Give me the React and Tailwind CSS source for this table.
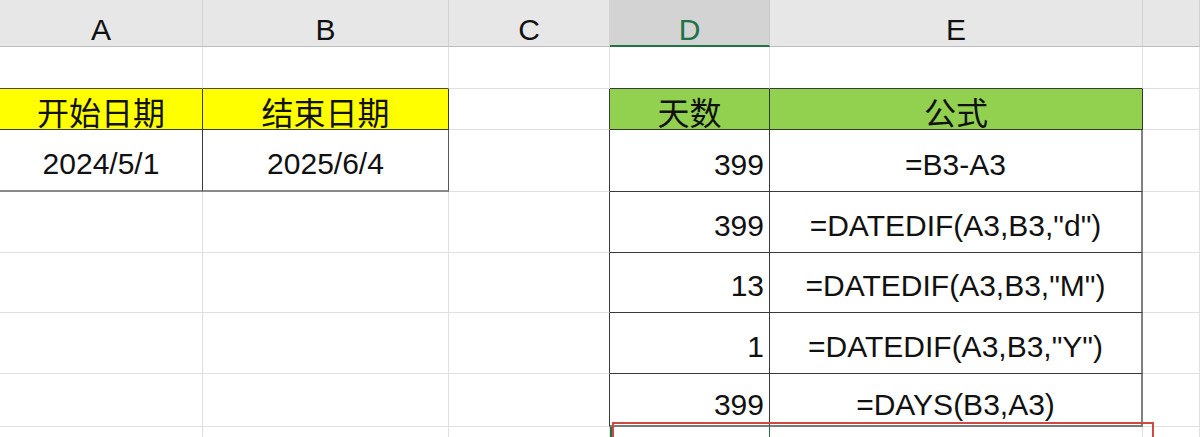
import React from "react"

const cols = ["A", "B", "C", "D", "E", ""]

export default function App() {
  return (
    <div
      className="relative w-[1200px] h-[437px] overflow-hidden bg-white text-[#111]"
      style={{ fontFamily: "'Liberation Sans', 'Noto Sans CJK SC', sans-serif" }}
    >
      <div className="grid grid-cols-[203px_246px_161px_160px_373px_1fr] grid-rows-[47px_42px_41px_62px_61px_60px_61px_53px_40px]">
        {/* ── column headers ── */}
        {cols.map((c) =>
          c === "D" ? (
            <div key={c} className="flex items-end justify-center bg-[#d3d3d3] border-r border-[#c8c8c8] border-b-2 border-b-[#217346] text-[30px] leading-none text-[#217346]">
              {c}
            </div>
          ) : (
            <div key={c || "f"} className="flex items-end justify-center bg-[#e7e7e7] border-r border-[#d2d2d2] border-b border-b-[#bdbdbd] text-[30px] leading-none pb-px">
              {c}
            </div>
          )
        )}

        {/* ── row 1 ── */}
        <div className="border-r border-[#e0e0e0] border-b border-b-[#4a4a4a]" />
        <div className="border-r border-[#e0e0e0] border-b border-b-[#4a4a4a]" />
        <div className="border-r border-b border-[#e0e0e0]" />
        <div className="border-r border-[#e0e0e0] border-b border-b-[#3a3a3a]" />
        <div className="border-r border-[#e0e0e0] border-b border-b-[#3a3a3a]" />
        <div className="border-r border-b border-[#e0e0e0]" />

        {/* ── row 2: table headers ── */}
        <div className="flex items-end justify-center bg-[#ffff00] border-r border-b border-[#3a3a3a] text-[32px] leading-none pb-[2px]" style={{ fontFamily: "'Noto Sans CJK SC', sans-serif" }}>
          开始日期
        </div>
        <div className="flex items-end justify-center bg-[#ffff00] border-r border-b border-[#3a3a3a] text-[32px] leading-none pb-[2px]" style={{ fontFamily: "'Noto Sans CJK SC', sans-serif" }}>
          结束日期
        </div>
        <div className="border-r border-r-[#3a3a3a] border-b border-b-[#e0e0e0]" />
        <div className="flex items-end justify-center bg-[#92d050] border-r border-b border-[#2f3a28] text-[32px] leading-none pb-[2px]" style={{ fontFamily: "'Noto Sans CJK SC', sans-serif" }}>
          天数
        </div>
        <div className="flex items-end justify-center bg-[#92d050] border-r border-b border-[#2f3a28] text-[32px] leading-none pb-[2px]" style={{ fontFamily: "'Noto Sans CJK SC', sans-serif" }}>
          公式
        </div>
        <div className="border-r border-b border-[#e0e0e0]" />

        {/* ── row 3 ── */}
        <div className="flex items-end justify-center border-r border-r-[#3a3a3a] border-b-2 border-b-[#8a8a8a] text-[30px] leading-none pb-[11px]">
          2024/5/1
        </div>
        <div className="flex items-end justify-center border-r border-r-[#5a5a5a] border-b-2 border-b-[#8a8a8a] text-[30px] leading-none pb-[11px]">
          2025/6/4
        </div>
        <div className="border-r border-r-[#3a3a3a] border-b border-b-[#e0e0e0]" />
        <div className="flex items-end justify-end border-r border-b border-[#3a3a3a] text-[30px] leading-none pb-[11px] pr-[5px]">
          399
        </div>
        <div className="flex items-end justify-center border-r-2 border-r-[#808080] border-b border-b-[#3a3a3a] text-[30px] leading-none pb-[11px]">
          =B3-A3
        </div>
        <div className="border-r border-b border-[#e0e0e0]" />

        {/* ── rows 4-7 ── */}
        {[
          ["399", '=DATEDIF(A3,B3,"d")'],
          ["13", '=DATEDIF(A3,B3,"M")'],
          ["1", '=DATEDIF(A3,B3,"Y")'],
          ["399", "=DAYS(B3,A3)"],
        ].map(([n, f], i) => {
          const last = i === 3
          return (
            <React.Fragment key={i}>
              <div className="border-r border-b border-[#e0e0e0]" />
              <div className="border-r border-b border-[#e0e0e0]" />
              <div className="border-r border-r-[#3a3a3a] border-b border-b-[#e0e0e0]" />
              <div className={last
                ? "flex items-end justify-end border-r border-r-[#3a3a3a] border-b-2 border-b-[#7a7a7a] text-[30px] leading-none pb-[5px] pr-[5px]"
                : "flex items-end justify-end border-r border-b border-[#3a3a3a] text-[30px] leading-none pb-[11px] pr-[5px]"}>
                {n}
              </div>
              <div className={last
                ? "flex items-end justify-center border-r-2 border-r-[#808080] border-b-2 border-b-[#7a7a7a] text-[30px] leading-none pb-[5px]"
                : "flex items-end justify-center border-r-2 border-r-[#808080] border-b border-b-[#3a3a3a] text-[30px] leading-none pb-[11px]"}>
                {f}
              </div>
              <div className="border-r border-b border-[#e0e0e0]" />
            </React.Fragment>
          )
        })}

        {/* ── row 8 (selected D8) ── */}
        <div className="border-r border-b border-[#e0e0e0]" />
        <div className="border-r border-b border-[#e0e0e0]" />
        <div className="border-r border-b border-[#e0e0e0]" />
        <div className="border-l-2 border-l-[#217346] border-r border-r-[#217346]" />
        <div className="border-r border-b border-[#e0e0e0]" />
        <div className="border-r border-b border-[#e0e0e0]" />
      </div>

      {/* red highlight box */}
      <div className="absolute left-[612px] top-[422px] w-[542px] h-[40px] border-2 border-[#cc4a43]" />
    </div>
  )
}
